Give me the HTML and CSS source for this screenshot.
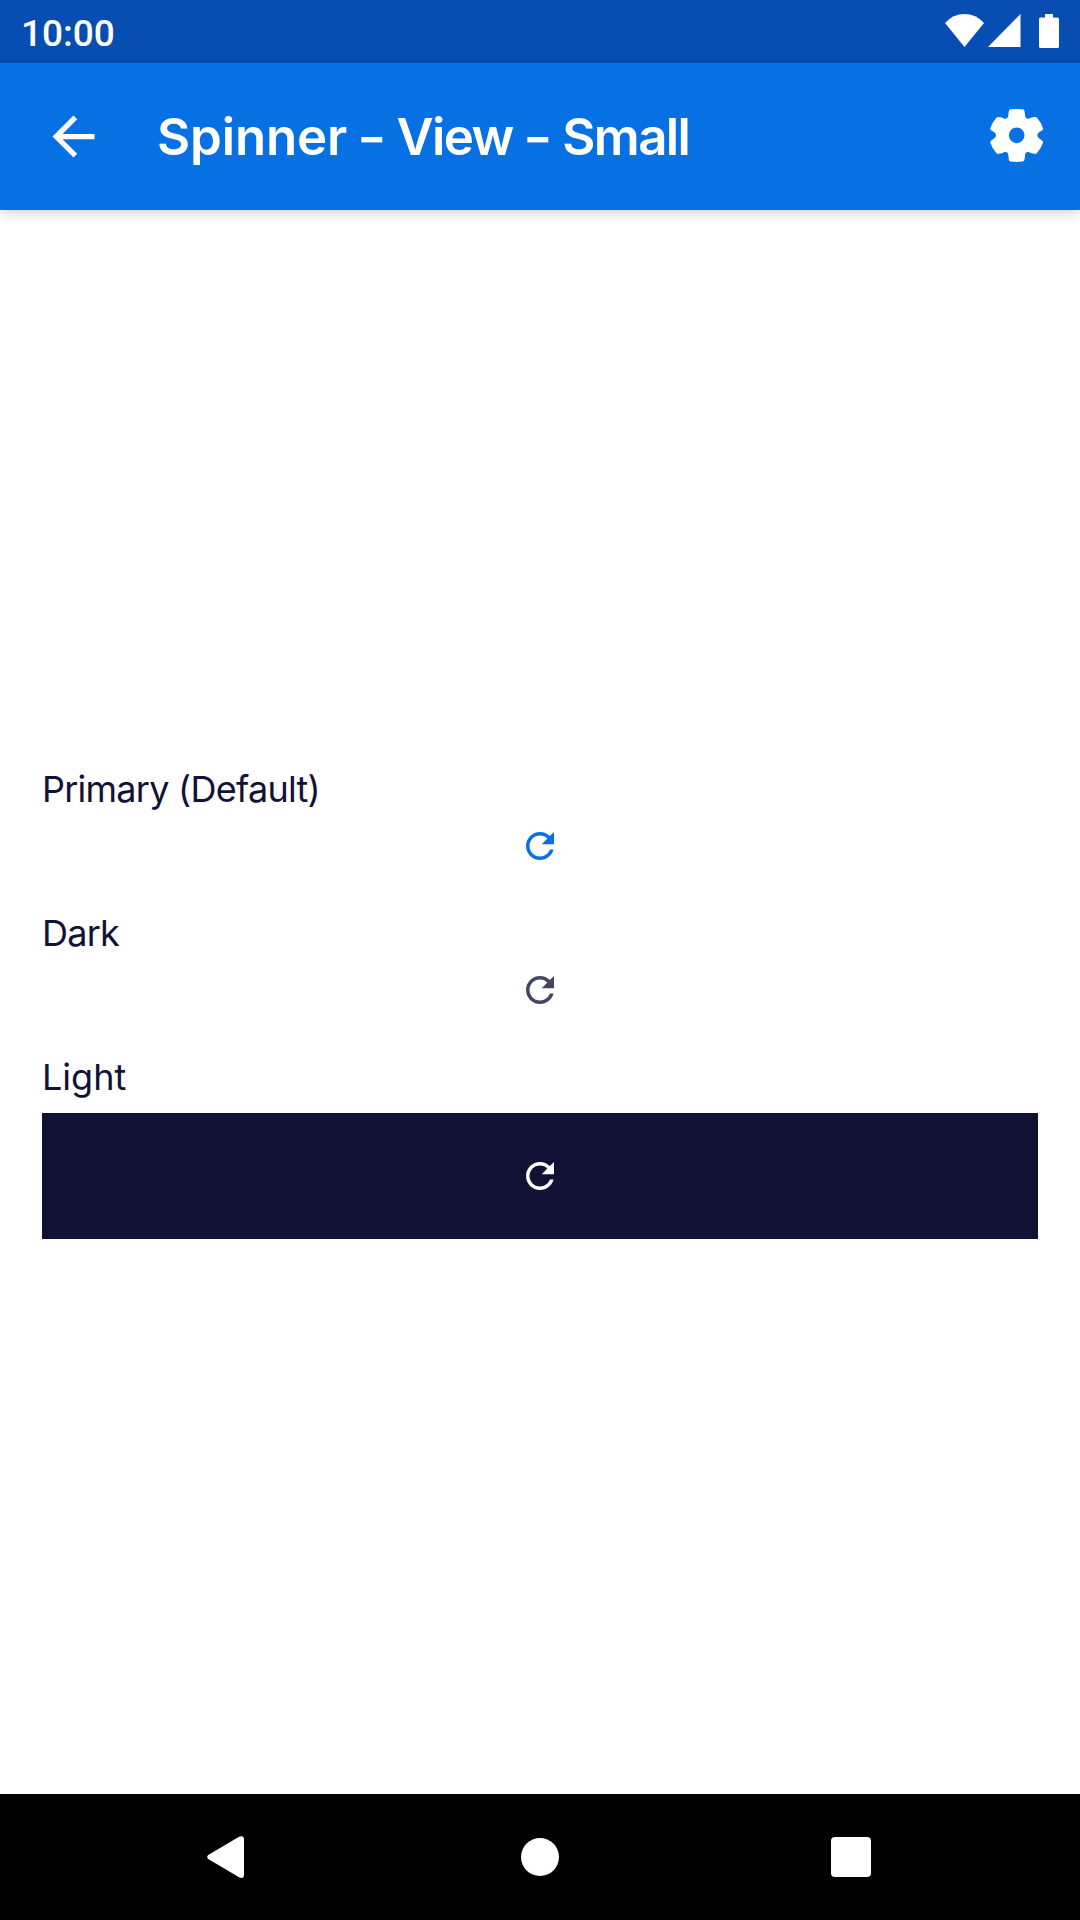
FILE: index.html
```html
<!DOCTYPE html>
<html lang="en">
<head>
<meta charset="utf-8">
<title>Spinner - View - Small</title>
<link rel="stylesheet" href="styles.css">
</head>
<body>
<svg width="0" height="0" class="defs" aria-hidden="true">
  <symbol id="refresh" viewBox="0 0 24 24">
    <path d="M17.65 6.35C16.2 4.9 14.21 4 12 4c-4.42 0-7.99 3.58-7.99 8s3.57 8 7.99 8c3.73 0 6.84-2.55 7.73-6h-2.08c-.82 2.33-3.04 4-5.65 4-3.31 0-6-2.69-6-6s2.69-6 6-6c1.66 0 3.14.69 4.22 1.78L13 11h7V4l-2.35 2.35z"/>
  </symbol>
</svg>
<div class="screen">
  <div class="status-bar">
    <span class="clock">10:00</span>
    <div class="status-icons">
      <svg class="wifi" viewBox="0 0 39 33"><path d="M0 9Q8 0 19.5 0T39 9L19.5 33Z"/></svg>
      <svg class="signal" viewBox="0 0 33 33"><path d="M0 33L32.5 0V33Z"/></svg>
      <svg class="battery" viewBox="0 0 20 34"><path d="M6 0h8v3.5h4.5q1.5 0 1.5 1.5v27.5q0 1.5-1.5 1.5h-17q-1.500 0-1.500-1.500v-27.500q0-1.500 1.500-1.500h4.500z"/></svg>
    </div>
  </div>
  <header class="app-bar">
    <svg class="back" viewBox="0 0 24 24"><path d="M20 11H7.830l5.590-5.590L12 4l-8 8 8 8 1.410-1.410L7.830 13H20z"/></svg>
    <h1 class="title"><span class="word-one">Spinner</span> <span class="dash">-</span> <span class="word-two">View</span> <span class="dash">-</span> <span class="word-three">Small</span></h1>
    <svg class="gear" viewBox="210 324 162 162"><path fill-rule="evenodd" d="M272 328Q290 325.500 308 328Q313 328.500 313.500 333L315.500 349Q317 358 326 356Q334 351 344 351Q348 350 351 353Q363 366 369 385Q370 388 367 391L357 397Q347 406 357 415L367 422Q370 425 369 428Q363 446 351 459Q348 463 344 461Q334 461 326 456Q317 454 315.500 463L313.500 479Q313 484 308 484.500Q290 487 272 484.500Q267 484 266.500 479L264.500 463Q263 454 254 456Q246 461 236 461Q232 463 229 459Q217 446 211 428Q210 425 213 422L223 415Q233 406 223 397L213 391Q210 388 211 385Q217 366 229 353Q232 350 236 351Q246 351 254 356Q263 358 264.500 349L266.500 333Q267 328.500 272 328ZM290 382.500a23.500 23.500 0 1 0 0 47a23.500 23.500 0 1 0 0-47Z"/></svg>
  </header>
  <main class="content">
    <section class="sample">
      <h2 class="label label-primary">Primary (Default)</h2>
      <div class="stage primary"><svg class="spinner"><use href="#refresh"/></svg></div>
    </section>
    <section class="sample">
      <h2 class="label label-dark">Dark</h2>
      <div class="stage dark"><svg class="spinner"><use href="#refresh"/></svg></div>
    </section>
    <section class="sample">
      <h2 class="label label-light">Light</h2>
      <div class="stage light"><svg class="spinner"><use href="#refresh"/></svg></div>
    </section>
  </main>
  <nav class="nav-bar">
    <svg class="nav-back" viewBox="0 0 37 42"><path d="M1.200 19L32.500.5Q37-1 37 3.500V38.500Q37 43 32.500 41.500L1.200 23Q-.8 21 1.200 19Z"/></svg>
    <span class="nav-home"></span>
    <span class="nav-recent"></span>
  </nav>
</div>
</body>
</html>
```
FILE: styles.css
```css
* { box-sizing: border-box; }
body { margin: 0; background: #fff; }
svg { display: block; fill: currentColor; flex: none; }
.defs { position: absolute; }

.screen {
  display: flex;
  flex-direction: column;
  width: 1080px;
  height: 1920px;
  overflow: hidden;
  font-family: Inter, "Liberation Sans", sans-serif;
}

.status-bar {
  display: flex;
  justify-content: space-between;
  height: 63px;
  padding: 0 21px 0 21px;
  background: #084eb2;
  color: #fff;
}
.clock {
  font: 500 37px/67px Roboto, sans-serif;
}
.status-icons { display: flex; padding-top: 14px; }
.wifi { width: 39px; height: 33px; margin-right: 4px; }
.signal { width: 33px; height: 33px; margin-right: 18px; }
.battery { width: 20px; height: 34px; }

.app-bar {
  display: flex;
  align-items: center;
  height: 147px;
  padding: 0 36px 0 42px;
  background: #0770e3;
  color: #fff;
  box-shadow: 0 3px 12px rgba(0, 0, 0, .18);
}
.back { width: 63px; height: 63px; }
.title {
  flex: 1;
  margin: 0 0 0 52px;
  font-size: 51px;
  font-weight: 600;
  line-height: 66px;
  white-space: nowrap;
}
.word-one { letter-spacing: -.15px; }
.word-two, .word-three { letter-spacing: -1.6px; }
.dash { display: inline-block; transform: scaleX(1.25); }
.gear { width: 54px; height: 54px; margin-bottom: 3px; }

.content {
  flex: 1;
  display: flex;
  flex-direction: column;
  justify-content: center;
  gap: 42px;
  padding: 0 42px;
}
.label {
  margin: 0;
  height: 60px;
  font-size: 36px;
  font-weight: 400;
  line-height: 48px;
  letter-spacing: -.75px;
  color: #111236;
  white-space: nowrap;
}
.label-light { letter-spacing: 0; }
.stage { display: flex; justify-content: center; }
.spinner { width: 42px; height: 42px; }
.primary { color: #0770e3; }
.dark { color: #444560; }
.light { padding: 42px 0; background: #111236; color: #fff; }

.nav-bar {
  display: flex;
  align-items: center;
  justify-content: space-between;
  height: 126px;
  padding: 0 209px 0 207px;
  background: #000;
  color: #fff;
}
.nav-back { width: 37px; height: 42px; }
.nav-home { width: 38px; height: 38px; margin-left: 5px; border-radius: 50%; background: #fff; }
.nav-recent { width: 40px; height: 40px; border-radius: 4px; background: #fff; }
```
